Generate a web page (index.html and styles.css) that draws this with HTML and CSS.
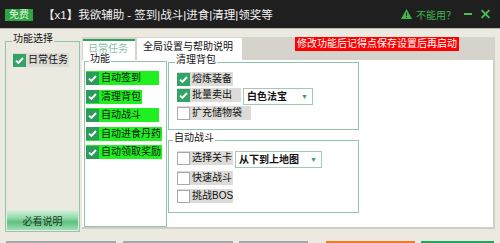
FILE: index.html
```html
<!DOCTYPE html>
<html lang="zh-CN">
<head>
  <meta charset="UTF-8">
  <title>我欲辅助</title>
  <link rel="stylesheet" href="styles.css">
</head>
<body>

<div class="titlebar">
  <span class="badge">免费</span>
  <span class="title">【x1】我欲辅助 - 签到|战斗|进食|清理|领奖等</span>
  <span class="tb-right">
    <svg class="warn" width="11" height="10" viewBox="0 0 11 10"><path d="M5.5 0 L11 10 L0 10 Z" fill="#3fb84a"/><rect x="5" y="3.5" width="1" height="3.5" fill="#1f1f1f"/><rect x="5" y="8" width="1" height="1" fill="#1f1f1f"/></svg>
    <span class="help">不能用？</span>
    <span class="tb-min"></span>
    <span class="tb-close"></span>
  </span>
</div>

<div class="main">
  <div class="group side">
    <div class="group-title">功能选择</div>
    <label class="check grey daily"><span class="box on"></span>日常任务</label>
    <button class="readme">必看说明</button>
  </div>

  <div class="tabs">
    <div class="tab-strip">
      <div class="tab active">日常任务</div>
      <div class="tab">全局设置与帮助说明</div>
      <div class="note">修改功能后记得点保存设置后再启动</div>
    </div>
    <div class="pane">
      <div class="group funcs">
        <div class="group-title">功能</div>
        <label class="check green w73"><span class="box on"></span>自动签到</label>
        <label class="check green"><span class="box on"></span>清理背包</label>
        <label class="check green w73"><span class="box on"></span>自动战斗</label>
        <label class="check green"><span class="box on"></span>自动进食丹药</label>
        <label class="check green"><span class="box on"></span>自动领取奖励</label>
      </div>

      <div class="col">
        <div class="group bag">
          <div class="group-title">清理背包</div>
          <div class="row"><label class="check grey"><span class="box on"></span>熔炼装备</label></div>
          <div class="row">
            <label class="check grey w64"><span class="box on"></span>批量卖出</label>
            <div class="combo w70">白色法宝<span class="arrow">▼</span></div>
          </div>
          <div class="row"><label class="check grey w74"><span class="box"></span>扩充储物袋</label></div>
        </div>

        <div class="group fight">
          <div class="group-title">自动战斗</div>
          <div class="row">
            <label class="check grey"><span class="box"></span>选择关卡</label>
            <div class="combo w87">从下到上地图<span class="arrow">▼</span></div>
          </div>
          <div class="row"><label class="check grey"><span class="box"></span>快速战斗</label></div>
          <div class="row"><label class="check grey clip"><span class="box"></span>挑战BOSS</label></div>
        </div>
      </div>
    </div>
  </div>
</div>

<div class="footer">
  <button class="fbtn b1"></button>
  <button class="fbtn b2"></button>
  <button class="fbtn b3"></button>
  <button class="fbtn orange"></button>
  <button class="fbtn green"></button>
</div>

</body>
</html>
```

FILE: styles.css
```css
body { margin: 0; width: 500px; height: 243px; overflow: hidden; background: #ece9e0; font-family: "Liberation Sans", "Noto Sans CJK SC", sans-serif; font-size: 10px; color: #111; }

.titlebar { height: 28px; background: #1f1f1f; border-bottom: 1px solid #b9b7ae; display: flex; align-items: center; padding: 0 10px 0 5px; }
.badge { background: #2fa544; color: #dff7df; font-size: 10px; line-height: 12px; padding: 0 4px; height: 12px; margin-top: 1px; }
.title { color: #f2f2f2; font-size: 11.5px; margin-left: 10px; }
.tb-right { margin-left: auto; display: flex; align-items: center; color: #3fb84a; font-size: 10px; }
.warn { margin-right: 4px; }
.help { margin-right: 8px; font-family: "Noto Sans CJK SC", sans-serif; }
.tb-min { width: 8px; height: 2px; background: #46c04e; }
.tb-close { width: 9px; height: 9px; margin-left: 9px; position: relative; }
.tb-close::before, .tb-close::after { content: ""; position: absolute; left: -1px; top: 3.5px; width: 11px; height: 2px; background: #46c04e; transform: rotate(45deg); }
.tb-close::after { transform: rotate(-45deg); }

.main { display: flex; padding: 0 5px; }

.group { border: 1px solid #92c6ac; display: flex; flex-direction: column; }
.group-title { align-self: flex-start; margin: -9px 0 0 5px; padding: 0 1px; line-height: 12px; height: 12px; background: #fff; }

.side { width: 73px; height: 189px; margin-top: 12px; background: #ece9e0; }
.side .group-title { background: #ece9e0; margin-left: 6px; }
.daily { margin: 8px 0 0 7px; }

.check { display: flex; align-items: center; height: 14px; line-height: 14px; padding-right: 1px; align-self: flex-start; white-space: nowrap; }
.check.grey { background: #dcdbd7; }
.check.green { background: #1ff01f; }
.box { width: 13px; height: 13px; box-sizing: border-box; border: 1px solid #a9a9a9; background: #fff; margin-right: 2px; flex: none; }
.box.on { border: none; background: #33a266 url("data:image/svg+xml;utf8,<svg xmlns='http://www.w3.org/2000/svg' width='13' height='13'><path d='M3 6.6 L5.4 9 L10 4' fill='none' stroke='white' stroke-width='1.9'/></svg>") no-repeat; }
.green .box.on { background-color: #2b9a5a; }

.w73 { width: 72px; }
.w64 { width: 63px; }
.w74 { width: 73px; }
.clip { width: 55px; overflow: hidden; }

.readme { margin: auto 1px 1px 1px; height: 20px; border: none; padding: 0; font: inherit; color: #1d3a27; background: linear-gradient(#d5f0dd, #92dba9 40%, #5dc07f 60%, #9fdfb4); }

.tabs { margin: 8px 0 0 2px; width: 413px; display: flex; flex-direction: column; }
.tab-strip { height: 23px; display: flex; align-items: flex-end; background: #d6d3cc; }
.tab { background: #fff; height: 22px; line-height: 18px; padding: 0 5px; box-sizing: border-box; }
.tab.active { margin-left: 1px; width: 52px; height: 21px; border-top: 2px solid #2ca35f; color: #8cbf9f; line-height: 16px; }
.tab + .tab { margin-left: 2px; width: 105px; padding-left: 6px; }
.note { align-self: flex-start; margin: 0 0 0 53px; background: #ff0000; color: #fff; line-height: 14px; height: 14px; padding: 0 2px; }

.pane { height: 167px; background: #fff; border-right: 2px solid #cfcdc6; border-bottom: 2px solid #cfcdc6; display: flex; padding-left: 2px; }
.funcs { width: 80px; margin-top: 1px; padding-left: 1px; }
.funcs .group-title { margin: -9px 0 6px 3px; }
.funcs .check + .check { margin-top: 4.5px; }

.col { margin-left: 1px; width: 191px; display: flex; flex-direction: column; }
.bag { margin-top: 2px; height: 66px; padding-left: 8px; }
.bag .group-title { margin: -9px 0 6px -2px; }
.bag .row + .row { margin-top: 1px; }
.fight { margin-top: 10px; height: 71px; padding-left: 8px; }
.fight .group-title { margin: -9px 0 7px -4px; }
.fight .row + .row { margin-top: 3px; }

.row { display: flex; align-items: center; min-height: 15px; }
.combo { margin-left: 2px; height: 17px; box-sizing: border-box; border: 1px solid #9fcbb5; font-weight: bold; line-height: 15px; padding-left: 3px; display: flex; }
.w70 { width: 70px; }
.w87 { width: 87px; }
.arrow { margin-left: auto; margin-right: 4px; color: #3a9a6a; font-size: 7px; font-weight: normal; }

.footer { display: flex; margin-top: 9px; padding-left: 6px; }
.fbtn { height: 20px; border: 1px solid #a7a7a7; border-top: 2px solid #a7a7a7; background: #e6e5e1; padding: 0; }
.b1 { width: 110px; }
.b2 { width: 110px; margin-left: 7px; }
.b3 { width: 69px; margin-left: 6px; }
.fbtn.orange { width: 89px; margin-left: 18px; border-color: #f37a22; background: #f37a22; }
.fbtn.green { width: 73px; margin-left: 6px; border-color: #22a55e; background: #22a55e; }
```
